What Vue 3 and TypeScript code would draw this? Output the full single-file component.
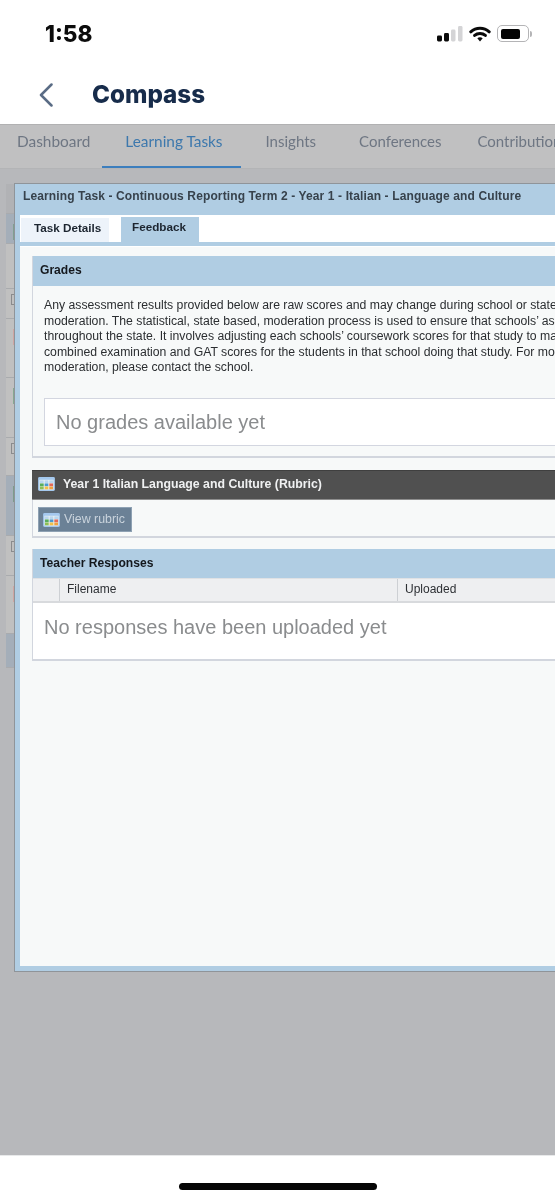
<template>
  <div class="phone">
    <div class="status-bar">
      <span class="time">1:58</span>
      <div class="status-icons">
        <svg class="signal" width="26" height="16" viewBox="0 0 26 16">
          <rect x="0" y="9.5" width="5" height="6" rx="1.4" fill="#0a0a0a" />
          <rect x="7" y="7" width="5" height="8.5" rx="1.4" fill="#0a0a0a" />
          <rect x="14" y="3.5" width="4.5" height="12" rx="1.4" fill="#d4d4d6" />
          <rect x="21" y="0" width="4.5" height="15.5" rx="1.4" fill="#d4d4d6" />
        </svg>
        <svg class="wifi" width="22" height="16" viewBox="0 0 22 16">
          <path d="M1.8 5.8C7 1 15 1 20.2 5.8" fill="none" stroke="#0a0a0a" stroke-width="3" stroke-linecap="round" />
          <path d="M5.6 9.4C8.6 6.7 13.4 6.7 16.4 9.4" fill="none" stroke="#0a0a0a" stroke-width="3" stroke-linecap="round" />
          <path d="M8.3 12.3L11 15.6L13.7 12.3C12.1 11 9.9 11 8.3 12.3Z" fill="#0a0a0a" />
        </svg>
        <div class="battery">
          <div class="battery-fill"></div>
        </div>
        <div class="battery-nub"></div>
      </div>
    </div>

    <header class="app-header">
      <svg class="back" width="14" height="24" viewBox="0 0 14 24">
        <path d="M12.5 1.5L2 12L12.5 22.5" fill="none" stroke="#5a6c85" stroke-width="2.5" stroke-linecap="round" stroke-linejoin="round" />
      </svg>
      <h1>Compass</h1>
    </header>

    <nav class="tabs">
      <a v-for="tab in tabs" :key="tab" class="tab" :class="{ active: tab === 'Learning Tasks' }">{{ tab }}</a>
    </nav>

    <main class="stage">
      <div class="behind-list">
        <div v-for="(row, i) in behindRows" :key="i" class="behind-row" :class="row.kind" :style="{ height: row.h + 'px' }">
          <span v-if="row.mark" class="behind-mark" :style="{ background: row.mark }"></span>
          <span v-if="row.kind === 'doc'" class="behind-doc"></span>
        </div>
      </div>

      <section class="modal">
        <div class="modal-title">Learning Task - Continuous Reporting Term 2 - Year 1 - Italian - Language and Culture</div>
        <div class="modal-inner">
          <div class="modal-tabs">
            <div class="modal-tab">Task Details</div>
            <div class="modal-tab current">Feedback</div>
          </div>
          <div class="modal-body">
            <div class="panel grades">
              <div class="panel-head">Grades</div>
              <div class="grades-body">
                <p v-for="line in gradeText" :key="line">{{ line }}</p>
                <div class="empty-box">No grades available yet</div>
              </div>
            </div>

            <div class="rubric">
              <div class="rubric-head">
                <svg class="grid-icon" width="17" height="14" viewBox="0 0 18 15">
                  <rect x="0" y="0" width="18" height="15" rx="1.5" fill="#a4c8ee" />
                  <rect x="1.5" y="3" width="15" height="10.5" fill="#eef3f2" />
                  <rect v-for="(c, i) in gridCells" :key="i" :x="c.x" :y="c.y" width="4" height="3" :fill="c.fill" />
                </svg>
                <span>Year 1 Italian Language and Culture (Rubric)</span>
              </div>
              <div class="rubric-body">
                <button class="rubric-btn">
                  <svg class="grid-icon" width="17" height="14" viewBox="0 0 18 15">
                    <rect x="0" y="0" width="18" height="15" rx="1.5" fill="#a4c8ee" />
                    <rect x="1.5" y="3" width="15" height="10.5" fill="#eef3f2" />
                    <rect v-for="(c, i) in gridCells" :key="i" :x="c.x" :y="c.y" width="4" height="3" :fill="c.fill" />
                  </svg>
                  <span class="btn-label">View rubric</span>
                </button>
              </div>
            </div>

            <div class="panel responses">
              <div class="panel-head">Teacher Responses</div>
              <div class="table-head">
                <div class="col-check"></div>
                <div class="col-file">Filename</div>
                <div class="col-date">Uploaded</div>
              </div>
              <div class="no-responses">No responses have been uploaded yet</div>
            </div>
          </div>
        </div>
      </section>
    </main>

    <footer class="home-area">
      <div class="home-bar"></div>
    </footer>
  </div>
</template>

<script setup lang="ts">
interface BehindRow {
  h: number
  kind: string
  mark?: string
}

const tabs = ['Dashboard', 'Learning Tasks', 'Insights', 'Conferences', 'Contributions']

const gradeText = [
  'Any assessment results provided below are raw scores and may change during school or state',
  'moderation. The statistical, state based, moderation process is used to ensure that schools\u2019 assessments',
  'throughout the state. It involves adjusting each schools\u2019 coursework scores for that study to match the',
  'combined examination and GAT scores for the students in that school doing that study. For more information',
  'moderation, please contact the school.'
]

// rows of the list that shows behind the modal
const behindRows: BehindRow[] = [
  { h: 30, kind: 'head' },
  { h: 30, kind: 'blue', mark: '#7f9f92' },
  { h: 45, kind: 'plain' },
  { h: 30, kind: 'doc' },
  { h: 59, kind: 'plain', mark: '#cfa5a3' },
  { h: 60, kind: 'plain', mark: '#86a892' },
  { h: 38, kind: 'doc' },
  { h: 60, kind: 'blue', mark: '#7c9c8c' },
  { h: 40, kind: 'doc' },
  { h: 58, kind: 'plain', mark: '#cfa5a3' },
  { h: 34, kind: 'blue' }
]

const gridCells = [
  { x: 2, y: 3.6, fill: '#b9d6ee' },
  { x: 7, y: 3.6, fill: '#b9d6ee' },
  { x: 12, y: 3.6, fill: '#b9d6ee' },
  { x: 2, y: 6.9, fill: '#58ad5c' },
  { x: 7, y: 6.9, fill: '#4a9ad0' },
  { x: 12, y: 6.9, fill: '#e2685a' },
  { x: 2, y: 10.2, fill: '#8fbf55' },
  { x: 7, y: 10.2, fill: '#f3c04a' },
  { x: 12, y: 10.2, fill: '#f0a040' }
]
</script>

<style>
html,
body {
  margin: 0;
  background: #fff;
}
</style>

<style scoped>
.phone {
  width: 555px;
  height: 1200px;
  overflow: hidden;
  display: flex;
  flex-direction: column;
  background: #fff;
  font-family: "Liberation Sans", Arial, sans-serif;
  filter: blur(0.35px);
}

.status-bar {
  height: 64px;
  flex: none;
  box-sizing: border-box;
  padding: 20px 23px 0 45px;
  display: flex;
  justify-content: space-between;
  align-items: flex-start;
}

.time {
  font-family: Inter, sans-serif;
  font-weight: 800;
  font-size: 22.5px;
  line-height: 27px;
  color: #0c0c0c;
}

.status-icons {
  display: flex;
  align-items: center;
  padding-top: 5px;
}

.signal {
  margin-right: 6px;
}

.wifi {
  margin-right: 6px;
}

.battery {
  width: 32px;
  height: 17px;
  box-sizing: border-box;
  border: 1.5px solid #b4b4b6;
  border-radius: 5px;
  padding: 2.5px;
}

.battery-fill {
  width: 19px;
  height: 100%;
  background: #050505;
  border-radius: 2px;
}

.battery-nub {
  width: 2px;
  height: 6px;
  margin-left: 1px;
  background: #b4b4b6;
  border-radius: 0 2px 2px 0;
}

.app-header {
  height: 60px;
  flex: none;
  box-sizing: border-box;
  padding: 0 0 0 39px;
  display: flex;
  align-items: center;
}

.back {
  flex: none;
  margin-right: 39px;
  margin-top: 1px;
}

h1 {
  margin: 0;
  font-family: Inter, sans-serif;
  font-weight: 800;
  font-size: 24.2px;
  line-height: 30px;
  color: #172c4b;
  position: relative;
  top: 1px;
}

.tabs {
  height: 45px;
  flex: none;
  box-sizing: border-box;
  display: flex;
  background: #c0c0c1;
  border-top: 1px solid #b1b1b2;
  border-bottom: 1px solid #b3b4b6;
  padding-left: 17px;
  white-space: nowrap;
  font-family: Lato, sans-serif;
  font-size: 15.4px;
  color: #6e7683;
}

.tab {
  line-height: 33px;
  margin-right: 43px;
  position: relative;
}

.tab:first-child {
  margin-right: 35px;
}

.tab:nth-child(n + 3) {
  font-size: 15px;
}

.tab:nth-child(4) {
  margin-right: 36px;
}

.tab.active {
  color: #3d78ad;
}

.tab.active::after {
  content: "";
  position: absolute;
  left: -23px;
  right: -18px;
  bottom: 0;
  height: 2px;
  background: #3c7ebd;
}

.stage {
  flex: 1;
  position: relative;
  background: #b7b8bb;
  padding: 15px 0 0 6px;
}

.behind-list {
  width: 8px;
}

.behind-row {
  box-sizing: border-box;
  border-bottom: 1px solid #a9abae;
  background: #c0c0c0;
  position: relative;
}

.behind-row.head {
  background: #b1b2b5;
}

.behind-row.blue {
  background: #a4aeb9;
}

.behind-mark {
  position: absolute;
  right: -1px;
  top: 10px;
  height: 16px;
  width: 2px;
}

.behind-doc {
  position: absolute;
  left: 5px;
  top: 5px;
  width: 4px;
  height: 9px;
  border: 1px solid #8a8b8d;
}

.modal {
  position: absolute;
  left: 14px;
  top: 14px;
  width: 800px;
  height: 789px;
  box-sizing: border-box;
  border-left: 1px solid #8f9499;
  border-top: 1px solid #8f9499;
  border-bottom: 1px solid #8f9499;
  background: #b0cde3;
  display: flex;
  flex-direction: column;
}

.modal-title {
  height: 31px;
  flex: none;
  box-sizing: border-box;
  padding-left: 8px;
  font-weight: 700;
  font-size: 12px;
  line-height: 25px;
  letter-spacing: 0.12px;
  color: #37424c;
  white-space: nowrap;
}

.modal-inner {
  flex: 1;
  margin: 0 0 5px 5px;
  display: flex;
  flex-direction: column;
  min-height: 0;
}

.modal-tabs {
  height: 27px;
  flex: none;
  box-sizing: border-box;
  background: #fff;
  display: flex;
  align-items: flex-end;
  padding-left: 1px;
}

.modal-tab {
  width: 88px;
  height: 24px;
  box-sizing: border-box;
  padding-left: 13px;
  background: #edf3fa;
  font-weight: 700;
  font-size: 11.7px;
  line-height: 19px;
  color: #1c2530;
}

.modal-tab.current {
  width: 78px;
  height: 25px;
  padding-left: 11px;
  line-height: 19px;
  margin-left: 12px;
  background: #b0cde3;
}

.modal-body {
  flex: 1;
  margin-top: 4px;
  box-sizing: border-box;
  background: #f7f9f9;
  border-top: 1px solid #fff;
  padding: 9px 0 0 12px;
}

.panel {
  border: 1px solid #d2d6de;
  border-top: none;
  border-right: none;
}

.panel-head {
  height: 30px;
  box-sizing: border-box;
  padding-left: 7px;
  background: #b0cde3;
  font-weight: 700;
  font-size: 12.1px;
  line-height: 28px;
  color: #14181d;
}

.grades {
  height: 202px;
  box-sizing: border-box;
  border-bottom-width: 2px;
}

.grades-body {
  padding: 12px 0 0 11px;
}

.grades-body p {
  margin: 0;
  font-size: 12.24px;
  line-height: 15.5px;
  color: #2b2e31;
  white-space: nowrap;
}

.empty-box {
  margin-top: 22px;
  height: 48px;
  box-sizing: border-box;
  background: #fff;
  border: 1.5px solid #d3d6e0;
  border-right: none;
  padding-left: 11px;
  font-size: 20px;
  line-height: 46px;
  color: #8a8c8e;
}

.rubric {
  margin-top: 12px;
  border-left: 1px solid #d2d6de;
  border-bottom: 2px solid #d2d6de;
}

.rubric-head {
  height: 30px;
  margin-left: -1px;
  box-sizing: border-box;
  padding: 0 0 2px 6px;
  display: flex;
  align-items: center;
  background: #505050;
  border-top: 1px solid #3f3f3f;
  border-bottom: 1px solid #8d8d8d;
  font-weight: 700;
  font-size: 12.3px;
  color: #f0f1f2;
  white-space: nowrap;
}

.grid-icon {
  flex: none;
}

.rubric-head .grid-icon {
  margin-right: 8px;
}

.rubric-body {
  height: 36px;
  box-sizing: border-box;
  padding: 7px 0 0 5px;
}

.rubric-btn {
  display: flex;
  align-items: center;
  width: 94px;
  height: 25px;
  padding: 0 0 0 4px;
  box-sizing: border-box;
  background: #6b8196;
  border: 1px solid #8ea1b3;
  font-family: "Liberation Sans", Arial, sans-serif;
  font-size: 12.4px;
  color: #c9d3dc;
}

.rubric-btn .grid-icon {
  margin-right: 4px;
}

.btn-label {
  padding-bottom: 2px;
}

.responses {
  margin-top: 11px;
  height: 112px;
  box-sizing: border-box;
  border-bottom-width: 2px;
  background: #fff;
}

.responses .panel-head {
  height: 29px;
}

.table-head {
  height: 25px;
  box-sizing: border-box;
  display: flex;
  background: #eeeff1;
  border-top: 1px solid #dfe1e4;
  border-bottom: 2px solid #d8dadd;
  font-size: 12px;
  line-height: 21px;
  color: #2d3034;
}

.col-check {
  width: 26px;
  border-right: 1px solid #cdd0d4;
}

.col-file {
  width: 338px;
  box-sizing: border-box;
  padding-left: 7px;
  border-right: 1px solid #cdd0d4;
}

.col-date {
  padding-left: 7px;
}

.no-responses {
  padding: 8px 0 0 11px;
  font-size: 20px;
  line-height: 32px;
  color: #8a8c8e;
  white-space: nowrap;
}

.home-area {
  height: 45px;
  flex: none;
  display: flex;
  justify-content: center;
  padding-top: 27px;
  box-sizing: border-box;
  border-top: 1px solid #e8e9ea;
}

.home-bar {
  width: 198px;
  height: 7px;
  margin-left: 1px;
  background: #050505;
  border-radius: 4px;
}
</style>
